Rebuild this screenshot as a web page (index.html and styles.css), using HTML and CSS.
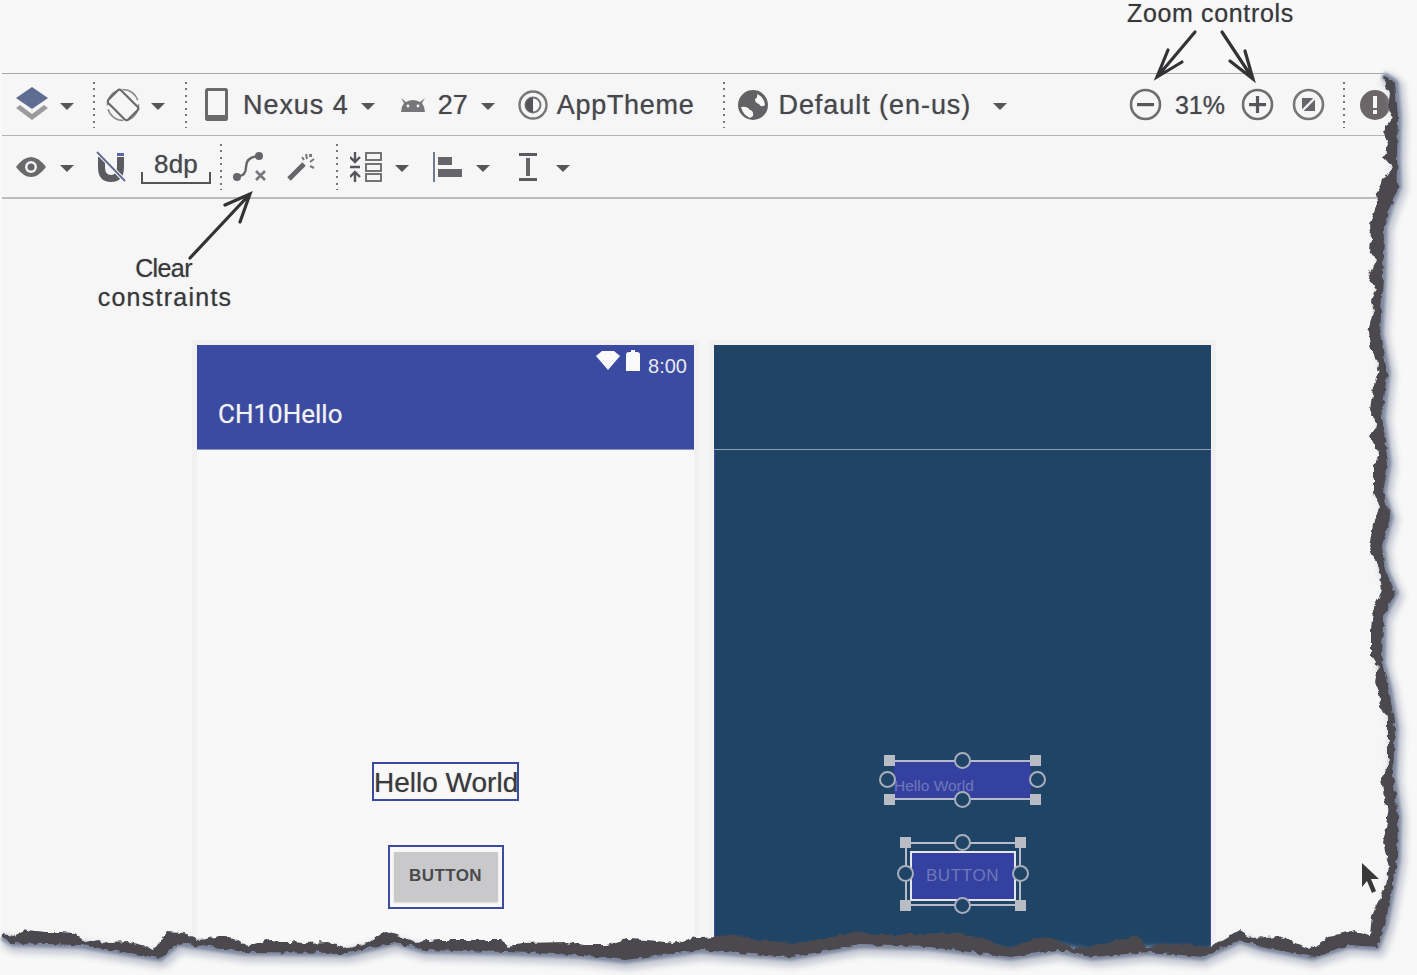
FILE: index.html
```html
<!DOCTYPE html>
<html lang="en">
<head>
  <meta charset="UTF-8">
  <title>Layout editor toolbar</title>
  <link rel="stylesheet" href="styles.css">
</head>
<body>
  <div class="page">
    <div class="note note-zoom">Zoom controls</div>

    <div class="editor">
      <div class="toolbar toolbar-top">
        <svg class="icon layers" viewBox="0 0 32 36"><polygon points="16,0 32,11 16,22 0,11" fill="#5f6d92"/><polygon points="0,21 4,18 16,27 28,18 32,21 16,33" fill="#9b9b9d"/></svg>
        <span class="caret after-layers"></span>
        <span class="divider after-caret"></span>
        <svg class="icon rotate" viewBox="0 0 34 34"><circle cx="17" cy="17" r="15.5" fill="none" stroke="#8a8a8c" stroke-width="1.6" stroke-dasharray="20 4"/><rect x="8" y="3" width="18" height="28" rx="2.5" transform="rotate(-45 17 17)" fill="#f6f6f6" stroke="#6a6a6c" stroke-width="2.2"/></svg>
        <span class="caret after-rotate"></span>
        <span class="divider after-caret-wide"></span>
        <svg class="icon phone" viewBox="0 0 23 33"><rect width="23" height="33" rx="2.5" fill="#6a6a6c"/><rect x="3" y="3" width="17" height="24" fill="#f6f6f6"/></svg>
        <span class="label nexus">Nexus 4</span>
        <span class="caret after-nexus"></span>
        <svg class="icon android" viewBox="0 0 24 14"><path d="M0,0 L5,4 Q12,0 19,4 L24,0 L21,5 Q24,9 24,14 L0,14 Q0,9 3,5 Z" fill="#77777a"/><circle cx="7" cy="8" r="1.4" fill="#f6f6f6"/><circle cx="17" cy="8" r="1.4" fill="#f6f6f6"/></svg>
        <span class="label api">27</span>
        <span class="caret after-api"></span>
        <svg class="icon theme" viewBox="0 0 30 30"><circle cx="15" cy="15" r="13.5" fill="none" stroke="#77777a" stroke-width="2.4"/><circle cx="15" cy="15" r="7.5" fill="none" stroke="#77777a" stroke-width="2"/><path d="M15,7.5 A7.5,7.5 0 0 0 15,22.5 Z" fill="#55555a"/></svg>
        <span class="label apptheme">AppTheme</span>
        <span class="divider after-theme"></span>
        <svg class="icon globe" viewBox="0 0 30 30"><circle cx="15" cy="15" r="15" fill="#626265"/><path d="M3,17 Q9,16 12,20 Q16,21 15,26 L12,28 Q5,25 3,17 Z M19,4 Q26,7 27,15 Q23,18 21,14 Q17,13 17,9 Q20,8 19,4 Z" fill="#f6f6f6"/></svg>
        <span class="label locale">Default (en-us)</span>
        <span class="caret after-locale"></span>

        <div class="zoom-group">
          <svg class="icon zoom-btn" viewBox="0 0 33 33"><circle cx="16.5" cy="16.5" r="14.5" fill="none" stroke="#6e6e72" stroke-width="2.6"/><rect x="8" y="15" width="17" height="3.2" fill="#55555a"/></svg>
          <span class="label percent">31%</span>
          <svg class="icon zoom-btn zoom-in" viewBox="0 0 33 33"><circle cx="16.5" cy="16.5" r="14.5" fill="none" stroke="#6e6e72" stroke-width="2.6"/><rect x="8" y="15" width="17" height="3.2" fill="#55555a"/><rect x="14.9" y="8" width="3.2" height="17" fill="#55555a"/></svg>
          <svg class="icon zoom-btn zoom-fit" viewBox="0 0 33 33"><circle cx="16.5" cy="16.5" r="14.5" fill="none" stroke="#77777a" stroke-width="2.6"/><rect x="10" y="10" width="13" height="13" fill="#66666a"/><path d="M10,23 L23,10" stroke="#f6f6f6" stroke-width="2.4"/></svg>
          <span class="divider after-zoom"></span>
          <svg class="icon warning" viewBox="0 0 30 30"><circle cx="15" cy="15" r="15" fill="#6b6769"/><rect x="13" y="6" width="4" height="12" fill="#f6f6f6"/><rect x="13" y="20" width="4" height="4" fill="#f6f6f6"/></svg>
        </div>
      </div>

      <div class="toolbar toolbar-bottom">
        <svg class="icon eye" viewBox="0 0 30 22"><path d="M0,11 Q15,-9 30,11 Q15,31 0,11 Z" fill="#6a6a6c"/><circle cx="15" cy="11" r="6" fill="#f2f2f2"/><circle cx="15" cy="11" r="3.5" fill="#66666a"/></svg>
        <span class="caret after-eye"></span>
        <svg class="icon magnet" viewBox="0 0 30 32"><path d="M2,6 H9 V16 Q9,24 15,24 Q21,24 21,16 V6 H28 V16 Q28,31 15,31 Q2,31 2,16 Z" fill="#5c5c60"/><rect x="21" y="2" width="7" height="3" fill="#5668a8"/><path d="M1,1 L29,30" stroke="#f6f6f6" stroke-width="4"/><path d="M1,1 L29,30" stroke="#5c6b90" stroke-width="1.8"/></svg>
        <div class="grid-size">8dp</div>
        <span class="divider after-grid"></span>
        <svg class="icon clear" viewBox="0 0 35 32"><path d="M6,25 Q14,25 14,16 Q14,6 26,5" fill="none" stroke="#66666a" stroke-width="2.4"/><circle cx="5" cy="26" r="4" fill="#66666a"/><circle cx="27" cy="5" r="4" fill="#66666a"/><path d="M24,20 L33,29 M33,20 L24,29" stroke="#77777c" stroke-width="2.6"/></svg>
        <svg class="icon wand" viewBox="0 0 30 30"><path d="M2,27 L17,12" stroke="#66666a" stroke-width="5"/><path d="M19,2 L20,7 M27,7 L23,10 M15,5 L17,8 M27,16 L23,14" stroke="#77777c" stroke-width="2"/><rect x="22" y="2" width="3" height="3" fill="#77777c"/></svg>
        <span class="divider after-wand"></span>
        <svg class="icon pack" viewBox="0 0 32 30"><path d="M5,0 V10 M0,5 L5,10 L10,5 M0,15 H10 M5,30 V20 M0,25 L5,20 L10,25" fill="none" stroke="#55555a" stroke-width="2.4"/><rect x="16" y="1" width="15" height="7" fill="none" stroke="#66666a" stroke-width="1.8"/><rect x="16" y="12" width="15" height="7" fill="none" stroke="#66666a" stroke-width="1.8"/><rect x="16" y="22" width="15" height="7" fill="none" stroke="#66666a" stroke-width="1.8"/></svg>
        <span class="caret after-pack"></span>
        <svg class="icon align" viewBox="0 0 30 30"><rect width="2" height="30" fill="#6f7a90"/><rect x="5" y="5" width="14" height="8" fill="#66666a"/><rect x="5" y="17" width="24" height="8" fill="#66666a"/></svg>
        <span class="caret after-align"></span>
        <svg class="icon spacing" viewBox="0 0 20 28"><rect x="1" y="0" width="18" height="3" fill="#5c5c60"/><rect x="1" y="25" width="18" height="3" fill="#5c5c60"/><rect x="8" y="5" width="4" height="18" fill="#66666a"/></svg>
        <span class="caret after-spacing"></span>
      </div>

      <div class="canvas">
        <div class="screen design">
          <div class="app-bar">
            <div class="status-bar">
              <svg class="wifi" viewBox="0 0 24 19"><polygon points="0,5 6,0 18,0 24,5 12,19" fill="#fafafa"/></svg>
              <svg class="battery" viewBox="0 0 14 21"><path d="M3,2 H5 V0 H9 V2 H11 Q14,2 14,5 V21 H0 V5 Q0,2 3,2 Z" fill="#fafafa"/></svg>
              <span class="clock">8:00</span>
            </div>
            <div class="app-title">CH10Hello</div>
          </div>
          <div class="screen-body">
            <div class="hello">Hello World</div>
            <div class="button-frame"><div class="button-face">BUTTON</div></div>
          </div>
        </div>

        <div class="screen blueprint">
          <div class="blue-bar"></div>
          <div class="blue-body">
            <div class="widget widget-text">
              <div class="widget-fill">Hello World</div>
              <i class="sq tl"></i><i class="sq tr"></i><i class="sq bl"></i><i class="sq br"></i>
              <i class="dot top"></i><i class="dot bottom"></i><i class="dot left"></i><i class="dot right"></i>
            </div>
            <div class="widget widget-button">
              <div class="widget-inner">BUTTON</div>
              <i class="sq tl"></i><i class="sq tr"></i><i class="sq bl"></i><i class="sq br"></i>
              <i class="dot top"></i><i class="dot bottom"></i><i class="dot left"></i><i class="dot right"></i>
            </div>
          </div>
        </div>
      </div>
    </div>

    <div class="note note-clear"><span class="clear-word">Clear</span><span class="clear-rest">constraints</span></div>

    <!-- torn paper edge, arrows and pointer sit over the screenshot -->
    <svg class="overlay" viewBox="0 0 1417 975">
      <defs>
        <filter id="soft" x="-5%" y="-5%" width="110%" height="110%"><feGaussianBlur stdDeviation="1.8"/></filter>
        <filter id="softer" x="-5%" y="-5%" width="110%" height="110%"><feGaussianBlur stdDeviation="3"/></filter>
        <filter id="ragged" x="-2%" y="-2%" width="104%" height="104%">
          <feTurbulence type="fractalNoise" baseFrequency="0.14" numOctaves="2" seed="7" result="noise"/>
          <feDisplacementMap in="SourceGraphic" in2="noise" scale="6" xChannelSelector="R" yChannelSelector="G"/>
        </filter>
        <polyline id="edge" fill="none" stroke-linejoin="round" points="1383,75 1395,83 1398,117 1397,157 1398,187 1390,207 1384,227 1383,277 1380,333 1387,373 1382,417 1388,463 1383,493 1390,517 1382,547 1385,570 1395,593 1383,617 1382,663 1389,690 1395,727 1393,777 1398,817 1397,860 1390,900 1385,925 1377,947 1349,945 1313,957 1262,947 1240,940 1203,957 1148,952 1093,957 1057,950 1011,957 929,947 860,945 791,957 700,950 625,960 580,955 504,952 424,950 395,942 348,953 245,952 178,943 160,958 80,945 13,943 2,937"/>
      </defs>
      <path fill="#f8f8f8" d="M1383,73 L1395,83 1398,117 1397,157 1398,187 1390,207 1384,227 1383,277 1380,333 1387,373 1382,417 1388,463 1383,493 1390,517 1382,547 1385,570 1395,593 1383,617 1382,663 1389,690 1395,727 1393,777 1398,817 1397,860 1390,900 1385,925 1377,947 1349,945 1313,957 1262,947 1240,940 1203,957 1148,952 1093,957 1057,950 1011,957 929,947 860,945 791,957 700,950 625,960 580,955 504,952 424,950 395,942 348,953 245,952 178,943 160,958 80,945 13,943 2,937 0,937 0,975 1417,975 1417,73 Z"/>
      <use href="#edge" stroke="#c6cad3" stroke-width="14" transform="translate(2,3)" filter="url(#softer)"/>
      <use href="#edge" stroke="#7f88a0" stroke-width="7" filter="url(#soft)"/>
      <path fill="#4b4a4d" filter="url(#ragged)" d="M1383,75 L1385,85 1390,93 1388,110 1393,117 1383,130 1388,145 1383,157 1393,167 1382,180 1375,197 1378,200 1370,223 1371,240 1370,250 1376,260 1368,277 1377,290 1371,300 1374,313 1370,322 1368,333 1371,350 1379,363 1378,373 1373,387 1370,410 1377,427 1369,435 1379,453 1374,467 1374,493 1380,507 1374,520 1369,547 1379,567 1382,590 1373,610 1371,630 1371,657 1378,667 1375,682 1380,697 1379,707 1388,717 1388,767 1381,778 1385,803 1389,813 1383,843 1389,867 1387,880 1380,900 1372,915 1370,935 1354,930 1329,937 1310,949 1278,936 1253,938 1240,930 1211,947 1176,943 1148,947 1137,935 1100,945 1075,948 1052,938 1038,938 1011,948 979,938 958,933 942,933 906,935 874,935 853,932 828,938 794,943 755,940 737,935 700,937 696,937 674,943 647,940 627,939 607,945 585,945 567,942 522,943 509,947 500,940 478,940 460,940 440,940 415,942 397,935 384,932 368,943 344,948 328,942 304,943 290,942 270,940 248,947 234,938 219,936 201,940 183,933 167,932 154,950 143,945 129,942 109,943 98,940 85,942 74,933 60,932 45,932 27,930 13,936 2,934 L2,937 13,943 80,945 160,958 178,943 245,952 348,953 395,942 424,950 504,952 580,955 625,960 700,950 791,957 860,945 929,947 1011,957 1057,950 1093,957 1148,952 1203,957 1240,940 1262,947 1313,957 1349,945 1377,947 1385,925 1390,900 1397,860 1398,817 1393,777 1395,727 1389,690 1382,663 1383,617 1395,593 1385,570 1382,547 1390,517 1383,493 1388,463 1382,417 1387,373 1380,333 1383,277 1384,227 1390,207 1398,187 1397,157 1398,117 1395,83 Z"/>
      <polygon fill="#38383b" points="1362,863 1362,887 1367,881 1372,893 1376,891 1371,879 1379,879"/>
      <g fill="none" stroke="#333336" stroke-width="3.2" stroke-linecap="round">
        <path d="M1195,32 L1157,77 M1168,50 L1157,77 L1182,62"/>
        <path d="M1222,32 L1253,79 M1230,61 L1253,79 L1245,51"/>
        <path d="M190,258 L250,194 M225,205 L250,194 L240,222"/>
      </g>
    </svg>
  </div>
</body>
</html>
```

FILE: styles.css
```css
* {
  box-sizing: border-box;
}

body {
  margin: 0;
  background: #f8f8f8;
  font-family: "Liberation Sans", Arial, sans-serif;
}

.page {
  position: relative;
  width: 1417px;
  height: 975px;
  overflow: hidden;
  background: #f8f8f8;
  color: #444448;
}

.note {
  position: absolute;
  color: #38383b;
  font-size: 25px;
  text-shadow: 0 0 1px rgba(60, 60, 64, 0.5);
}

.note-zoom {
  left: 1127px;
  top: -1px;
  letter-spacing: 0.65px;
}

.note-clear {
  left: 98px;
  top: 254px;
  display: flex;
  flex-direction: column;
  align-items: center;
  width: 134px;
  line-height: 29px;
}

.clear-word {
  margin-left: -3px;
  letter-spacing: -0.6px;
}

.clear-rest {
  letter-spacing: 1.25px;
}

.editor {
  margin: 73px 0 0 2px;
  background: #f6f6f6;
  border-top: 1px solid #a8a8aa;
  height: 902px;
}

.toolbar {
  display: flex;
  align-items: center;
  padding-left: 14px;
}

.toolbar-top {
  height: 62px;
  border-bottom: 1px solid #b4b4b6;
}

.toolbar-bottom {
  height: 63px;
  border-bottom: 2px solid #bcbcbe;
}

.icon {
  display: block;
  flex: none;
}

.label {
  margin-top: 2px;
  font-size: 27px;
  letter-spacing: 0.95px;
  white-space: nowrap;
  color: #47474c;
  text-shadow: 0 0 1px rgba(60, 60, 70, 0.55);
}

.caret {
  flex: none;
  width: 0;
  height: 0;
  margin-top: 3px;
  border-left: 7.5px solid transparent;
  border-right: 7.5px solid transparent;
  border-top: 7px solid #555558;
}

.divider {
  flex: none;
  width: 2px;
  height: 46px;
  background: repeating-linear-gradient(to bottom, #77777a 0 2px, transparent 2px 6.5px);
}

/* top row */
.layers { width: 32px; height: 36px; }
.after-layers { margin-left: 12px; }
.after-caret { margin-left: 19px; }
.rotate { width: 34px; height: 34px; margin-left: 11px; }
.after-rotate { margin-left: 11px; }
.after-caret-wide { margin-left: 20px; }
.phone { width: 23px; height: 33px; margin-left: 18px; }
.nexus { margin-left: 15px; }
.after-nexus { margin-left: 12px; }
.android { width: 24px; height: 14px; margin-left: 26px; }
.api { margin-left: 13px; letter-spacing: 0; }
.after-api { margin-left: 13px; }
.theme { width: 30px; height: 30px; margin-left: 23px; }
.apptheme { margin-left: 9px; letter-spacing: 0.7px; }
.after-theme { margin-left: 29px; }
.globe { width: 30px; height: 30px; margin-left: 13px; }
.locale { margin-left: 10px; }
.after-locale { margin-left: 22px; }

.zoom-group {
  display: flex;
  align-items: center;
  margin-left: auto;
  padding-right: 27px;
}

.zoom-btn { width: 33px; height: 33px; }
.percent { margin-left: 13px; font-size: 25px; letter-spacing: 0; }
.zoom-in { margin-left: 16px; }
.zoom-fit { margin-left: 18px; }
.after-zoom { margin-left: 18px; }
.warning { width: 30px; height: 30px; margin-left: 15px; }

/* bottom row */
.eye { width: 30px; height: 22px; }
.after-eye { margin-left: 14px; }
.magnet { width: 30px; height: 32px; margin-left: 22px; }

.grid-size {
  flex: none;
  width: 70px;
  height: 32px;
  margin: 2px 0 0 15px;
  background:
    linear-gradient(#555558, #555558) left bottom / 2px 12px no-repeat,
    linear-gradient(#555558, #555558) right bottom / 2px 12px no-repeat,
    linear-gradient(#555558, #555558) left bottom / 100% 2px no-repeat;
  font-size: 26px;
  line-height: 24px;
  letter-spacing: 0.2px;
  text-align: center;
  color: #47474c;
  text-shadow: 0 0 1px rgba(60, 60, 70, 0.55);
}

.after-grid { margin-left: 9px; }
.clear { width: 35px; height: 32px; margin-left: 10px; }
.wand { width: 30px; height: 30px; margin-left: 20px; }
.after-wand { margin-left: 19px; }
.pack { width: 32px; height: 30px; margin-left: 12px; }
.after-pack { margin-left: 13px; }
.align { width: 30px; height: 30px; margin-left: 24px; }
.after-align { margin-left: 13px; }
.spacing { width: 20px; height: 28px; margin-left: 28px; }
.after-spacing { margin-left: 18px; }

/* design surface */
.canvas {
  display: flex;
  gap: 20px;
  padding: 146px 0 0 195px;
}

.screen {
  flex: none;
  width: 497px;
  height: 640px;
  box-shadow: 0 0 0 5px #f1f1f1;
}

.design {
  background: #f8f8f8;
}

.app-bar {
  height: 105px;
  padding: 5px 7px 0 21px;
  background: #3b4ba1;
  border-bottom: 1px solid #8f94b8;
  color: #f2f2f2;
}

.status-bar {
  display: flex;
  justify-content: flex-end;
  align-items: flex-start;
  height: 47px;
}

.wifi { width: 24px; height: 19px; margin-top: 1px; }
.battery { width: 14px; height: 21px; margin-left: 6px; }

.clock {
  margin: 4px 0 0 8px;
  font-size: 20px;
  line-height: 24px;
  color: #e8e8ee;
}

.app-title {
  font-family: Roboto, "Liberation Sans", sans-serif;
  font-size: 26px;
  line-height: 34px;
  text-shadow: 0 0 1px rgba(240, 240, 245, 0.5);
}

.screen-body {
  display: flex;
  flex-direction: column;
  align-items: center;
  padding-top: 312px;
}

.hello {
  width: 147px;
  height: 39px;
  border: 2px solid #3b4ba1;
  font-size: 28px;
  line-height: 38px;
  white-space: nowrap;
  color: #3a3a3d;
  text-shadow: 0 0 1px rgba(60, 60, 64, 0.5);
}

.button-frame {
  width: 116px;
  height: 64px;
  margin-top: 44px;
  padding: 5px 4px;
  border: 2px solid #3b4ba1;
}

.button-face {
  height: 50px;
  background: #c9c9cb;
  box-shadow: 0 1px 2px #d8d8d8;
  font-size: 17px;
  font-weight: bold;
  line-height: 48px;
  letter-spacing: 0.4px;
  text-align: center;
  color: #4a4a4d;
}

.blueprint {
  background: #204466;
}

.blue-bar {
  height: 105px;
  border-bottom: 1px solid #8fa0b4;
}

.blue-body {
  display: flex;
  flex-direction: column;
  align-items: center;
  height: 535px;
  padding-top: 310px;
  border-left: 1px solid #3b4ba1;
  border-right: 1px solid #3b4ba1;
}

.widget {
  position: relative;
  flex: none;
}

.widget-text {
  width: 147px;
  height: 40px;
  border-top: 2px solid #b7bcc8;
  border-bottom: 2px solid #b7bcc8;
}

.widget-fill {
  height: 36px;
  margin: 0 5px;
  background: #3441a0;
  font-size: 15.5px;
  line-height: 48px;
  white-space: nowrap;
  overflow: hidden;
  color: #6f78b8;
}

.widget-button {
  width: 116px;
  height: 64px;
  margin-top: 42px;
  padding: 7px 3px 3px;
  border: 2px solid #b7bcc8;
}

.widget-inner {
  height: 50px;
  border: 2px solid #e4e6ee;
  background: #3441a0;
  font-size: 17px;
  line-height: 46px;
  letter-spacing: 0.6px;
  text-align: center;
  color: #6f78b8;
}

.sq {
  position: absolute;
  width: 11px;
  height: 11px;
  background: #b9bcc4;
}

.sq.tl { left: -5px; top: -7px; }
.sq.tr { right: -5px; top: -7px; }
.sq.bl { left: -5px; bottom: -7px; }
.sq.br { right: -5px; bottom: -7px; }

.widget-button .sq.tl, .widget-button .sq.bl { left: -7px; }
.widget-button .sq.tr, .widget-button .sq.br { right: -7px; }

.dot {
  position: absolute;
  width: 17px;
  height: 17px;
  border: 2px solid #a9aebc;
  border-radius: 50%;
  background: #204466;
}

.dot.top { left: 50%; top: -10px; margin-left: -9px; }
.dot.bottom { left: 50%; bottom: -10px; margin-left: -9px; }
.dot.left { left: -10px; top: 50%; margin-top: -9px; }
.dot.right { right: -10px; top: 50%; margin-top: -9px; }

.overlay {
  position: absolute;
  left: 0;
  top: 0;
  width: 1417px;
  height: 975px;
  pointer-events: none;
}
```
